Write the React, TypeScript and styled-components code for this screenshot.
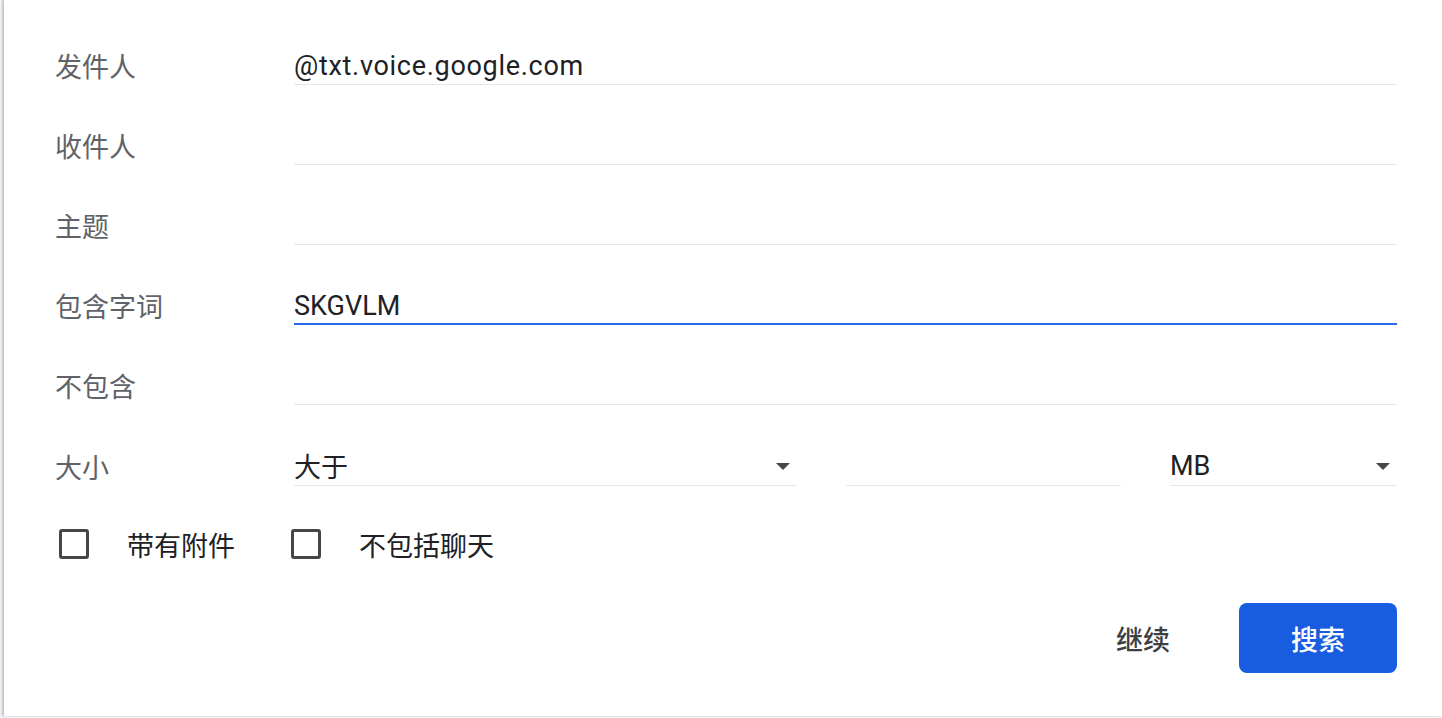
import React from "react";
import styled, { createGlobalStyle } from "styled-components";

const Global = createGlobalStyle`
  html, body { margin: 0; padding: 0; background: #ffffff; }
  body { font-family: Roboto, "Noto Sans CJK SC", sans-serif; overflow: hidden; }
  * { box-sizing: border-box; }
`;

const Frame = styled.div`
  width: 1442px;
  height: 718px;
  background: #f4f5f7;
  padding: 0 0 2px 4px;
`;

const Panel = styled.div`
  height: 100%;
  background: #ffffff;
  box-shadow: -2px 0 2px rgba(60, 64, 67, 0.28);
  padding: 36px 45px 0 51px;
`;

const Row = styled.div`
  display: grid;
  grid-template-columns: 239px 1fr;
  height: 48px;
  margin-bottom: 32px;
`;

const Label = styled.div`
  display: flex;
  align-items: center;
  padding-top: 10px;
  font-size: 27px;
  color: #5f6368;
`;

const Field = styled.div<{ $focused?: boolean; $wide?: boolean }>`
  display: flex;
  align-items: center;
  padding-top: 12px;
  font-size: 27px;
  color: #202124;
  letter-spacing: ${(p) => (p.$wide ? "0.7px" : "0")};
  border-bottom: ${(p) => (p.$focused ? "2px solid #2a6ae6" : "1px solid #e4e6ea")};
  min-width: 0;
`;

const SizeFields = styled.div`
  display: grid;
  grid-template-columns: 503px 275px 1fr;
  column-gap: 49px;
`;

const SelectField = styled(Field)`
  justify-content: space-between;
  padding-top: 10px;
  padding-right: 7px;
`;

const Caret = styled.span`
  width: 0;
  height: 0;
  border-left: 7px solid transparent;
  border-right: 7px solid transparent;
  border-top: 7px solid #444746;
  margin-top: 2px;
`;

const CheckRow = styled.div`
  display: flex;
  align-items: center;
  height: 60px;
  margin-top: -2px;
  padding-left: 4px;
`;

const CheckItem = styled.label`
  display: flex;
  align-items: center;
  gap: 38px;
  margin-right: 56px;
  font-size: 27px;
  color: #202124;
`;

const Box = styled.span`
  width: 30px;
  height: 30px;
  border: 3px solid #444746;
  border-radius: 3px;
  display: inline-block;
`;

const Actions = styled.div`
  display: flex;
  justify-content: flex-end;
  align-items: center;
  margin-top: 29px;
`;

const TextButton = styled.button`
  font-family: Roboto, "Noto Sans CJK SC", sans-serif;
  font-size: 27px;
  font-weight: 500;
  color: #3c4043;
  background: transparent;
  border: none;
  padding: 0 24px;
  height: 70px;
  margin-right: 45px;
`;

const PrimaryButton = styled.button`
  font-family: Roboto, "Noto Sans CJK SC", sans-serif;
  font-size: 27px;
  font-weight: 500;
  color: #ffffff;
  background: #185ddf;
  border: none;
  border-radius: 8px;
  width: 158px;
  height: 70px;
`;

const rows: { label: string; value?: string; focused?: boolean; wide?: boolean }[] = [
  { label: "发件人", value: "@txt.voice.google.com", wide: true },
  { label: "收件人" },
  { label: "主题" },
  { label: "包含字词", value: "SKGVLM", focused: true },
  { label: "不包含" },
];

export default function App() {
  return (
    <Frame>
      <Global />
      <Panel>
        {rows.map((r) => (
          <Row key={r.label}>
            <Label>{r.label}</Label>
            <Field $focused={r.focused} $wide={r.wide}>
              {r.value}
            </Field>
          </Row>
        ))}
        <Row>
          <Label>大小</Label>
          <SizeFields>
            <SelectField>
              <span>大于</span>
              <Caret />
            </SelectField>
            <Field />
            <SelectField>
              <span>MB</span>
              <Caret />
            </SelectField>
          </SizeFields>
        </Row>
        <CheckRow>
          <CheckItem>
            <Box />
            带有附件
          </CheckItem>
          <CheckItem>
            <Box />
            不包括聊天
          </CheckItem>
        </CheckRow>
        <Actions>
          <TextButton>继续</TextButton>
          <PrimaryButton>搜索</PrimaryButton>
        </Actions>
      </Panel>
    </Frame>
  );
}
